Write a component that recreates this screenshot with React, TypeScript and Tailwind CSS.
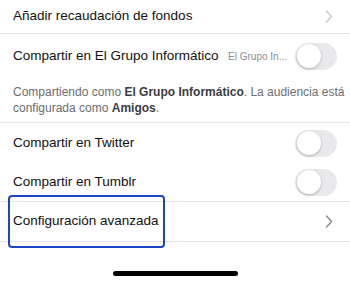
const Toggle = () => (
  <div className="w-[42px] h-[27px] rounded-full bg-[#e9e9eb] p-[1.5px] flex items-center">
    <div className="w-[24px] h-[24px] rounded-full bg-white shadow-[0_1px_3px_rgba(0,0,0,0.25)]" />
  </div>
);

const Chevron = ({ color }: { color: string }) => (
  <svg width="8" height="13" viewBox="0 0 8 13" fill="none">
    <polyline points="1.5,1 6.5,6.5 1.5,12" stroke={color} strokeWidth="1.4" strokeLinecap="round" strokeLinejoin="round" />
  </svg>
);

const App = () => {
  return (
    <div className="w-[350px] h-[283px] bg-white overflow-hidden flex flex-col text-[#111] font-['Liberation_Sans',sans-serif]">
      <div className="h-[34px] flex items-center justify-between pl-[13px] pr-[17px] border-b border-[#e6e6e8]">
        <span className="text-[13.5px] whitespace-nowrap">Añadir recaudación de fondos</span>
        <Chevron color="#c7c7cc" />
      </div>

      <div className="h-[44px] flex items-center pl-[13px] pr-[13px]">
        <span className="text-[13.5px] flex-1 whitespace-nowrap">Compartir en El Grupo Informático</span>
        <span className="text-[10px] text-[#8e8e93] mr-[8px] whitespace-nowrap">El Grupo In...</span>
        <Toggle />
      </div>

      <div className="pl-[13px] pr-[2px] pt-[6px] pb-[6px] text-[12px] leading-[16px] text-[#6d6d72] whitespace-nowrap border-b border-[#e6e6e8]">
        Compartiendo como <span className="font-bold text-[#3c3c43]">El Grupo Informático</span>. La audiencia está
        <br />
        configurada como <span className="font-bold text-[#3c3c43]">Amigos</span>.
      </div>

      <div className="h-[40px] flex items-center justify-between pl-[13px] pr-[13px]">
        <span className="text-[13.5px]">Compartir en Twitter</span>
        <Toggle />
      </div>

      <div className="h-[39px] flex items-center justify-between pl-[13px] pr-[13px] border-b border-[#e6e6e8]">
        <span className="text-[13.5px]">Compartir en Tumblr</span>
        <Toggle />
      </div>

      <div className="relative h-[40px] flex items-center justify-between pl-[13px] pr-[17px] border-b border-[#e6e6e8]">
        <span className="text-[13.5px]">Configuración avanzada</span>
        <Chevron color="#8a8a8e" />
        <div className="absolute left-[8px] top-[-7px] w-[157px] h-[53px] border-2 border-[#1c45c4] rounded-[4px]" />
      </div>

      <div className="flex-1 flex items-end justify-center pb-[7px]">
        <div className="w-[125px] h-[5px] rounded-full bg-black" />
      </div>
    </div>
  );
};

export default App;
